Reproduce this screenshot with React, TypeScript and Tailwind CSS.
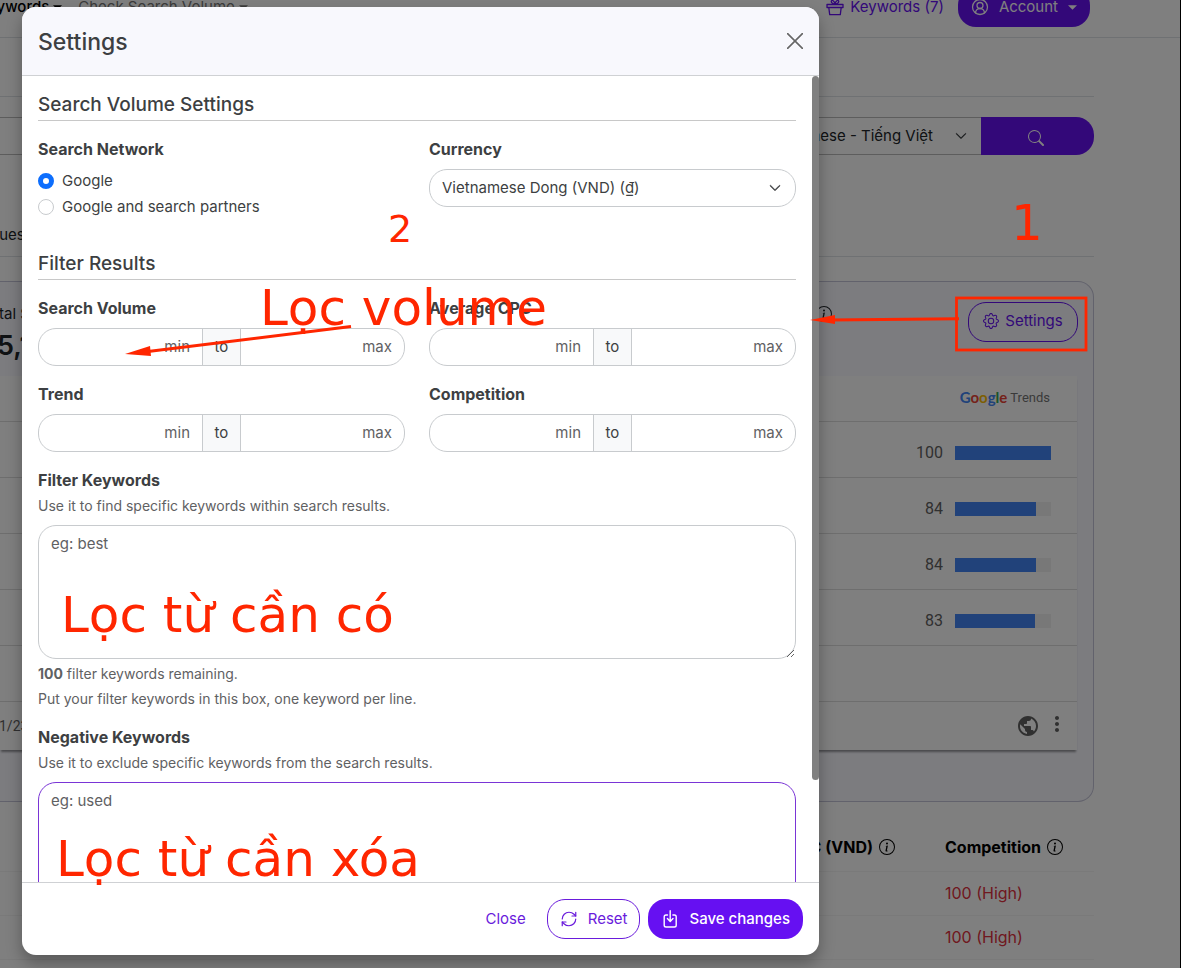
import type { ReactNode } from "react";
import { CircleUserRound, RefreshCw } from "lucide-react";
import { BsChevronDown, BsGear, BsInfoCircle, BsSearch } from "react-icons/bs";
import { MdMoreVert, MdPublic } from "react-icons/md";

type RangeFieldProps = {
  id: string;
  label: string;
};

type KeywordBoxProps = {
  id: string;
  label: string;
  hint: string;
  placeholder: string;
  focused?: boolean;
  children?: ReactNode;
};

const trends = [100, 84, 84, 83];
const competition = ["100 (High)", "100 (High)"];

function Caret() {
  return (
    <svg viewBox="0 0 10 5" className="h-[5px] w-[9px]" fill="currentColor" aria-hidden="true">
      <path d="M0 0h10L5 5z" />
    </svg>
  );
}

function GiftIcon() {
  return (
    <svg
      viewBox="0 0 18 18"
      className="size-[18px]"
      fill="none"
      stroke="currentColor"
      strokeWidth="1.3"
      strokeLinejoin="round"
      aria-hidden="true"
    >
      <path d="M1 6.500h16v3H1zM2.800 9.500l.9 7.200h10.600l.9-7.200" />
      <path d="M9 6.300C7 6 5 4.800 5.300 3.200S8.600 2.500 9 6.300C9.400 2.500 12.400 1.600 12.700 3.200S11 6 9 6.300z" />
    </svg>
  );
}

function SaveIcon() {
  return (
    <svg
      viewBox="0 0 18 18"
      className="size-[18px]"
      fill="none"
      stroke="currentColor"
      strokeWidth="1.4"
      strokeLinecap="round"
      strokeLinejoin="round"
      aria-hidden="true"
    >
      <path d="M6.500 5H5a1.800 1.800 0 0 0-1.800 1.800v8.400A1.800 1.800 0 0 0 5 17h8.400a1.800 1.800 0 0 0 1.800-1.800V6.800A1.800 1.800 0 0 0 13.400 5h-1.500" />
      <path d="M9.200 .8v10.400M6.400 8.600l2.800 2.800 2.800-2.800" />
    </svg>
  );
}

function TrendsWidget() {
  return (
    <div className="bg-white font-['Roboto',sans-serif] shadow-[0_3px_2px_-1px_rgba(0,0,0,0.4)]">
      <div className="flex h-[46px] items-center justify-end gap-[3px] border-b border-[#ddd] pr-[27px] pb-0.5 text-[13px] text-[#757575]">
        <span className="font-['Lato',sans-serif] text-[15px] font-bold">
          <span className="text-[#4285f4]">G</span>
          <span className="text-[#ea4335]">o</span>
          <span className="text-[#fbbc05]">o</span>
          <span className="text-[#4285f4]">g</span>
          <span className="text-[#34a853]">l</span>
          <span className="text-[#ea4335]">e</span>
        </span>
        Trends
      </div>
      {trends.map((value, index) => (
        <div
          key={index}
          className="flex h-14 items-center justify-end gap-3 border-b border-[#ddd] pt-2 pr-[26px] pb-0.5 text-base text-[#616161]"
        >
          <span>{value}</span>
          <div className="h-3.5 w-24 bg-[#f0f0f0]">
            <div className="h-full bg-[#4285f4]" style={{ width: `${value}%` }} />
          </div>
        </div>
      ))}
      <div className="h-14 border-b border-[#ddd]" />
      <div className="flex h-12 items-center text-[#616161]">
        <span className="-ml-px text-sm">1/23, 9:00 AM</span>
        <MdPublic className="mr-[5px] ml-auto size-6" />
        <MdMoreVert className="mr-2 mb-1 size-6" />
      </div>
    </div>
  );
}

function Page() {
  return (
    <div className="min-h-screen border-r border-black bg-white text-[#212529]">
      <header className="flex h-[38px] items-end overflow-hidden border-b border-[#dee2e6] pr-[90px] pb-[10px] text-[15px]">
        <nav className="flex h-10 items-center gap-4">
          <a href="#keywords" className="-ml-3 flex items-center gap-1 font-medium text-black">
            eywords <Caret />
          </a>
          <a href="#volume" className="flex items-center gap-1 text-[#777]">
            Check Search Volume <Caret />
          </a>
        </nav>
        <a
          href="#saved"
          className="mr-3.5 ml-auto flex h-10 items-center gap-1.5 text-[#6610f2]"
        >
          <GiftIcon /> Keywords (7)
        </a>
        <button
          type="button"
          className="flex h-10 items-center gap-2.5 rounded-[18px] bg-[#6610f2] px-[13px] text-white"
        >
          <CircleUserRound className="size-[18px]" strokeWidth={1.7} />
          <span>Account</span>
          <Caret />
        </button>
      </header>

      <main className="pr-[86px]">
        <div className="h-[59px] border-b border-[#dee2e6]" />
        <div className="mt-5 flex h-[38px]">
          <button
            type="button"
            className="flex flex-1 items-center justify-end gap-[22px] border-y border-[#bbb] pr-3.5 text-[15px]"
          >
            Vietnamese - Tiếng Việt <BsChevronDown className="size-3 stroke-[0.6]" />
          </button>
          <button
            type="button"
            aria-label="Search"
            className="flex w-[113px] items-center justify-center rounded-r-[18px] bg-[#6610f2] text-white"
          >
            <BsSearch className="mt-1 mr-1 size-4" />
          </button>
        </div>
        <div className="flex h-[102px] items-end border-b border-[#dee2e6] pb-2.5 text-[15px]">
          <span className="-ml-2.5">ques</span>
        </div>

        <section className="mt-6 rounded-r-2xl border-y border-r border-[#c5c5d8] bg-[#f8f8ff] pb-[51px]">
          <div className="flex h-[94px] pt-5 pr-[15px]">
            <div>
              <p className="-ml-px w-36 text-[15px] leading-6">tal Searches</p>
              <p className="-ml-[3px] text-[27px] leading-10 font-semibold">5,100</p>
            </div>
            <BsInfoCircle className="mt-1 ml-auto size-4" />
            <button
              type="button"
              className="ml-[136px] flex h-10 w-[110px] items-center justify-center gap-1.5 rounded-[18px] border border-[#6610f2] pb-0.5 text-[15px] text-[#6610f2]"
            >
              <BsGear className="size-4" /> Settings
            </button>
          </div>
          <div className="mr-4">
            <TrendsWidget />
          </div>
        </section>

        <table className="mt-[21px] w-full text-left text-base">
          <thead>
            <tr className="h-12 border-b border-[#f4f4f4] font-bold text-black">
              <th className="pr-[50px]">
                <span className="flex items-center justify-end gap-1.5">
                  CPC (VND) <BsInfoCircle className="size-4" />
                </span>
              </th>
              <th className="w-[149px]">
                <span className="flex items-center gap-1.5">
                  Competition <BsInfoCircle className="size-4" />
                </span>
              </th>
            </tr>
          </thead>
          <tbody>
            {competition.map((value, index) => (
              <tr key={index} className="h-11 border-b border-[#f4f4f4]">
                <td />
                <td className="text-[#e03040]">{value}</td>
              </tr>
            ))}
          </tbody>
        </table>
      </main>
    </div>
  );
}

function SectionTitle({ children }: { children: ReactNode }) {
  return (
    <h2 className="border-b border-[#c8c8c8] pt-px pb-[3px] text-[19px] leading-6 font-medium">
      {children}
    </h2>
  );
}

function RangeField({ id, label }: RangeFieldProps) {
  return (
    <div>
      <label htmlFor={`${id}-min`} className="mb-2 block text-base font-bold">
        {label}
      </label>
      <div className="flex h-[38px] overflow-hidden rounded-[18px] border border-[#c8cbce]">
        <input
          id={`${id}-min`}
          placeholder="min"
          className="min-w-0 flex-1 px-3 text-right outline-none placeholder:text-[#5f6163]"
        />
        <span className="flex w-[39px] items-center justify-center border-x border-[#c8cbce] bg-[#f8f9fa]">
          to
        </span>
        <input
          aria-label={`${label} max`}
          placeholder="max"
          className="min-w-0 flex-1 px-3 text-right outline-none placeholder:text-[#5f6163]"
        />
      </div>
    </div>
  );
}

function KeywordBox({ id, label, hint, placeholder, focused, children }: KeywordBoxProps) {
  return (
    <div>
      <label htmlFor={id} className="block text-base font-bold">
        {label}
      </label>
      <p className="mt-1 text-sm text-[#5f6163]">{hint}</p>
      <textarea
        id={id}
        rows={5}
        placeholder={placeholder}
        className={`mt-[9px] block w-full rounded-[18px] border px-3 py-1.5 outline-none placeholder:text-[#5f6163] ${
          focused ? "border-[#7a35d6]" : "border-[#c8cbce]"
        }`}
      />
      {children}
    </div>
  );
}

function SettingsModal() {
  return (
    <div
      role="dialog"
      aria-modal="true"
      aria-labelledby="settings-title"
      className="flex h-full w-full max-w-[797px] flex-col overflow-hidden rounded-[14px] bg-white text-[15px] leading-6 text-[#3d3f42] shadow-[0_8px_16px_rgba(0,0,0,0.3)]"
    >
      <div className="flex h-[69px] shrink-0 items-center justify-between border-b border-[#cfd1d4] bg-[#f8f8fd] px-4">
        <h1 id="settings-title" className="pt-0.5 text-[23px] font-medium">
          Settings
        </h1>
        <button type="button" aria-label="Close settings" className="text-[#666]">
          <svg viewBox="0 0 16 16" className="size-4" stroke="currentColor" strokeWidth="1.6">
            <path d="M.6.6l14.8 14.8M15.4.6L.6 15.4" strokeLinecap="round" />
          </svg>
        </button>
      </div>

      <div className="relative min-h-0 flex-1">
        <div className="h-full overflow-y-auto pt-4 pr-[23px] pl-4 [scrollbar-width:none]">
          <SectionTitle>Search Volume Settings</SectionTitle>
          <div className="mt-4 grid grid-cols-2 gap-6">
            <fieldset>
              <legend className="mb-2 text-base font-bold">Search Network</legend>
              <label className="mb-0.5 flex items-center gap-2">
                <input
                  type="radio"
                  name="network"
                  defaultChecked
                  className="size-4 appearance-none rounded-full border-[#0d6efd] bg-white checked:border-[5px]"
                />
                Google
              </label>
              <label className="flex items-center gap-2">
                <input
                  type="radio"
                  name="network"
                  className="size-4 appearance-none rounded-full border border-[#c8cbce] bg-white"
                />
                Google and search partners
              </label>
            </fieldset>
            <div>
              <label htmlFor="currency" className="mb-2 block text-base font-bold">
                Currency
              </label>
              <div className="relative">
                <select
                  id="currency"
                  className="h-[38px] w-full appearance-none rounded-[18px] border border-[#c8cbce] bg-white px-3"
                >
                  <option>Vietnamese Dong (VND) (₫)</option>
                </select>
                <BsChevronDown className="pointer-events-none absolute top-[13px] right-[15px] size-3 stroke-1" />
              </div>
            </div>
          </div>

          <div className="mt-8">
            <SectionTitle>Filter Results</SectionTitle>
          </div>
          <div className="mt-4 grid grid-cols-2 gap-x-6 gap-y-4">
            <RangeField id="volume" label="Search Volume" />
            <RangeField id="cpc" label="Average CPC" />
            <RangeField id="trend" label="Trend" />
            <RangeField id="competition" label="Competition" />
          </div>

          <div className="mt-4 mb-4 space-y-4">
            <KeywordBox
              id="filter-keywords"
              label="Filter Keywords"
              hint="Use it to find specific keywords within search results."
              placeholder="eg: best"
            >
              <p className="mt-1 text-sm leading-[21px] text-[#5f6163]">
                <strong>100</strong> filter keywords remaining.
              </p>
              <p className="mt-1 text-sm leading-[21px] text-[#5f6163]">
                Put your filter keywords in this box, one keyword per line.
              </p>
            </KeywordBox>
            <KeywordBox
              id="negative-keywords"
              label="Negative Keywords"
              hint="Use it to exclude specific keywords from the search results."
              placeholder="eg: used"
              focused
            />
          </div>
        </div>
        <div className="absolute top-0 right-0 h-[704px] w-[7px] rounded-full bg-[#808080]" />
      </div>

      <div className="flex h-[73px] shrink-0 items-center justify-end gap-2 border-t border-[#cfd1d4] px-4">
        <button type="button" className="h-10 px-[13px] text-[#6a1bdc]">
          Close
        </button>
        <button
          type="button"
          className="flex h-10 items-center gap-2.5 rounded-[18px] border border-[#6a1bdc] px-3 text-[#6a1bdc]"
        >
          <RefreshCw className="size-[18px]" strokeWidth={1.6} /> Reset
        </button>
        <button
          type="button"
          className="flex h-10 items-center gap-2.5 rounded-[18px] bg-[#6610f2] px-[13px] font-medium text-white"
        >
          <SaveIcon /> Save changes
        </button>
      </div>
    </div>
  );
}

function Annotations() {
  return (
    <div className="pointer-events-none absolute inset-0 overflow-hidden font-['DejaVu_Sans',sans-serif] text-[50px] leading-none whitespace-nowrap text-[#ff2600]">
      <svg className="absolute top-0 left-0" width="1181" height="968" fill="none" aria-hidden="true">
        <rect x="956.500" y="298" width="129.500" height="52" stroke="#ff2600" strokeWidth="2.800" />
        <path d="M959 318.700L830 320" stroke="#ff2600" strokeWidth="3" />
        <path d="M810 320l25-5v9z" fill="#ff2600" />
        <path d="M351 326.500L148 351.500" stroke="#ff2600" strokeWidth="3" />
        <path d="M125 354l25-8 1 10z" fill="#ff2600" />
      </svg>
      <span className="absolute top-[198px] left-[1011px]">1</span>
      <span className="absolute top-[210px] left-[388px] text-[38px]">2</span>
      <span className="absolute top-[283px] left-[260px]">Lọc volume</span>
      <span className="absolute top-[590px] left-[61px]">Lọc từ cần có</span>
      <span className="absolute top-[834px] left-[56px]">Lọc từ cần xóa</span>
    </div>
  );
}

export default function App() {
  return (
    <div className="relative h-screen overflow-hidden font-['Inter',sans-serif]">
      <Page />
      <div className="absolute inset-0 bg-black/50 pt-[7px] pb-[13px] pl-[22px]">
        <SettingsModal />
      </div>
      <Annotations />
    </div>
  );
}
